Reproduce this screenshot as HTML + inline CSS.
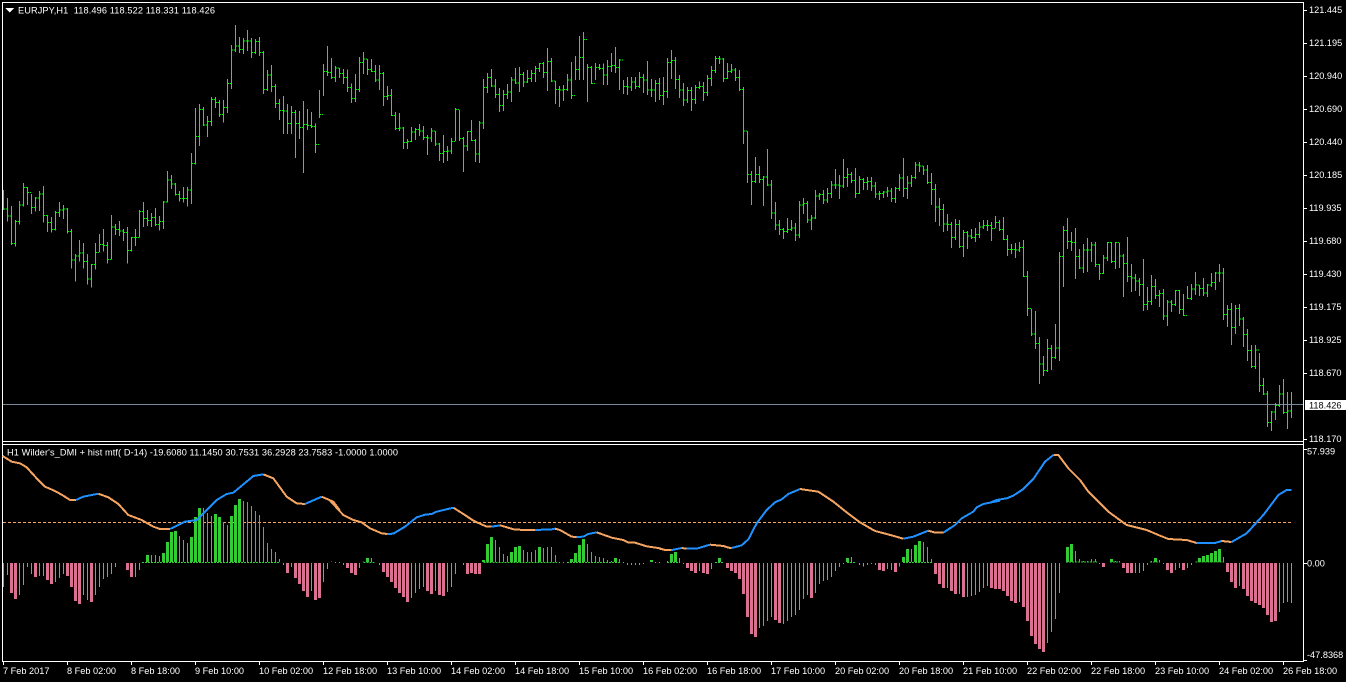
<!DOCTYPE html>
<html><head><meta charset="utf-8"><title>EURJPY,H1</title>
<style>html,body{margin:0;padding:0;background:#000;width:1346px;height:682px;overflow:hidden}svg{display:block}
text{font-family:"Liberation Sans",sans-serif;font-size:9.2px;fill:#fff}</style></head><body>
<svg width="1346" height="682" viewBox="0 0 1346 682" xmlns="http://www.w3.org/2000/svg">
<rect width="1346" height="682" fill="#000"/>
<g shape-rendering="crispEdges" fill="none">
<path d="M2.5 2V662M2 2.5H1304M1303.5 2V662M2 441.5H1304M2 444.5H1304M2 661.5H1304" stroke="#fff"/>
<path d="M1304 10.5h3M1304 43.5h3M1304 76.5h3M1304 109.5h3M1304 142.5h3M1304 175.5h3M1304 208.5h3M1304 241.5h3M1304 274.5h3M1304 307.5h3M1304 340.5h3M1304 373.5h3M1304 439.5h3M1304 449.5h3M1304 563.5h3M1304 660.5h3" stroke="#fff"/>
<path d="M3.5 662v3M67.5 662v3M131.5 662v3M195.5 662v3M259.5 662v3M323.5 662v3M387.5 662v3M451.5 662v3M515.5 662v3M579.5 662v3M643.5 662v3M707.5 662v3M771.5 662v3M835.5 662v3M899.5 662v3M963.5 662v3M1027.5 662v3M1091.5 662v3M1155.5 662v3M1219.5 662v3M1283.5 662v3" stroke="#fff"/>
<path d="M3 404.5H1303" stroke="#778899"/>
<path d="M3 522.5H1291" stroke="#f4a460" stroke-dasharray="3 2"/>
<rect x="1305" y="400" width="41" height="10" fill="#fff"/>
<path d="M5 8h9l-4.5 4.5z" fill="#fff"/>

<g stroke="#00ff00" stroke-width="3.01" transform="translate(.17,20) scale(.33333)">
<path d="M10 510V570M22 534V605M34 558V675M46 600V680M58 543V614M70 489V560M82 501V555M94 522V582M106 531V575M118 513V573M130 498V608M142 585V636M154 591V638M166 573V632M178 546V591M190 555V597M202 564V641M214 627V746M226 702V785M238 660V725M250 669V745M262 702V794M274 732V803M286 669V749M298 642V696M310 627V695M322 666V731M334 585V718M346 612V645M358 603V648M370 627V663M382 621V731M394 651V695M406 627V678M418 570V653M430 546V621M442 570V618M454 579V621M466 564V618M478 588V632M490 543V627M502 453V547M514 465V507M526 489V527M538 513V545M550 501V548M562 501V560M574 399V552M586 264V433M598 252V378M610 261V318M622 288V351M634 231V318M646 231V264M658 240V291M670 240V308M682 177V279M694 75V207M706 15V96M718 51V99M730 54V102M742 30V93M754 54V114M766 57V102M778 51V108M790 93V222M802 150V213M814 135V216M826 192V264M838 237V300M850 228V342M862 252V342M874 258V342M886 270V414M898 273V357M910 243V459M922 267V330M934 276V324M946 310V399M958 210V294M970 132V228M982 78V168"/>
<path stroke-dasharray="3 3" d="M11.5 567h10M23.5 588h10M35.5 670h10M47.5 605h10M59.5 555h10M71.5 502h10M83.5 517h10M95.5 562h10M107.5 534h10M119.5 522h10M131.5 586h10M143.5 607h10M155.5 628h10M167.5 577h10M179.5 570h10M191.5 567h10M203.5 634h10M215.5 720h10M227.5 708h10M239.5 699h10M251.5 724h10M263.5 777h10M275.5 733h10M287.5 697h10M299.5 673h10M311.5 676h10M323.5 718h10M335.5 621h10M347.5 628h10M359.5 633h10M371.5 638h10M383.5 691h10M395.5 652h10M407.5 653h10M419.5 575h10M431.5 595h10M443.5 601h10M455.5 592h10M467.5 613h10M479.5 604h10M491.5 546h10M503.5 480h10M515.5 492h10M527.5 524h10M539.5 535h10M551.5 535h10M563.5 510h10M575.5 430h10M587.5 349h10M599.5 268h10M611.5 315h10M623.5 304h10M635.5 238h10M647.5 247h10M659.5 283h10M671.5 262h10M683.5 190h10M695.5 90h10M707.5 78h10M719.5 88h10M731.5 63h10M743.5 63h10M755.5 98h10M767.5 64h10M779.5 97h10M791.5 208h10M803.5 165h10M815.5 199h10M827.5 250h10M839.5 271h10M851.5 273h10M863.5 310h10M875.5 277h10M887.5 310h10M899.5 322h10M911.5 313h10M923.5 316h10M935.5 320h10M947.5 373h10M959.5 283h10M971.5 154h10M983.5 157h10"/>
</g>
<g stroke="#00ff00" stroke-width="3.01" transform="translate(330.17,20) scale(.33333)">
<path d="M4 114V177M16 138V186M28 144V174M40 147V192M52 148V216M64 190V249M76 162V246M88 111V216M100 96V162M112 117V165M124 117V156M136 135V186M148 135V210M160 156V258M172 198V240M184 207V288M196 276V330M208 279V333M220 321V387M232 357V387M244 321V366M256 324V360M268 312V348M280 318V360M292 345V405M304 324V366M316 333V378M328 369V423M340 345V429M352 378V423M364 354V402M376 264V363M388 270V363M400 351V456M412 333V393M424 300V363M436 357V426M448 303V429M460 177V327M472 159V219M484 147V201M496 177V234M508 204V276M520 210V273M532 192V237M544 171V246M556 144V192M568 141V216M580 156V201M592 150V189M604 150V186M616 138V186M628 129V156M640 126V174M652 84V213M664 114V186M676 183V252M688 198V261M700 195V243M712 162V213M724 126V237M736 108V180M748 48V180M760 36V180M772 132V246M784 138V192M796 129V180M808 132V150M820 130V195M832 120V195M844 99V156M856 81V159M868 117V210M880 180V222M892 171V225M904 171V213M916 171V207M928 156V204M940 162V219M952 123V225M964 177V231M976 180V246M988 174V240"/>
<path stroke-dasharray="3 3" d="M5.5 172h10M17.5 144h10M29.5 160h10M41.5 172h10M53.5 203h10M65.5 236h10M77.5 208h10M89.5 127h10M101.5 117h10M113.5 148h10M125.5 154h10M137.5 180h10M149.5 160h10M161.5 229h10M173.5 226h10M185.5 286h10M197.5 325h10M209.5 324h10M221.5 367h10M233.5 364h10M245.5 336h10M257.5 328h10M269.5 333h10M281.5 352h10M293.5 354h10M305.5 333h10M317.5 372h10M329.5 400h10M341.5 394h10M353.5 393h10M365.5 365h10M377.5 268h10M389.5 355h10M401.5 378h10M413.5 335h10M425.5 361h10M437.5 402h10M449.5 309h10M461.5 203h10M473.5 172h10M485.5 198h10M497.5 223h10M509.5 256h10M521.5 223h10M533.5 216h10M545.5 180h10M557.5 189h10M569.5 163h10M581.5 186h10M593.5 175h10M605.5 160h10M617.5 146h10M629.5 130h10M641.5 157h10M653.5 125h10M665.5 183h10M677.5 208h10M689.5 210h10M701.5 208h10M713.5 180h10M725.5 226h10M737.5 148h10M749.5 112h10M761.5 58h10M773.5 143h10M785.5 190h10M797.5 143h10M809.5 145h10M821.5 165h10M833.5 140h10M845.5 136h10M857.5 142h10M869.5 120h10M881.5 200h10M893.5 201h10M905.5 186h10M917.5 200h10M929.5 172h10M941.5 180h10M953.5 210h10M965.5 210h10M977.5 190h10M989.5 226h10"/>
</g>
<g stroke="#00ff00" stroke-width="3.01" transform="translate(660.17,40) scale(.33333)">
<path d="M10 111V195M22 54V174M34 30V117M46 51V147M58 105V174M70 129V198M82 141V189M94 141V213M106 135V192M118 124V147M130 126V183M142 105V168M154 78V138M166 48V99M178 48V72M190 54V126M202 69V117M214 72V99M226 84V123M238 90V153M250 141V312M262 273V429M274 393V495M286 351V429M298 378V429M310 408V498M322 327V438M334 420V537M346 486V570M358 540V585M370 564V597M382 534V579M394 540V573M406 549V603M418 483V594M430 474V522M442 483V549M454 525V570M466 450V537M478 459V480M490 450V492M502 444V489M514 423V474M526 387V447M538 405V477M550 357V444M562 384V441M574 396V429M586 384V474M598 408V462M610 414V450M622 411V450M634 411V453M646 426V474M658 453V480M670 453V474M682 441V471M694 444V486M706 441V489M718 402V453M730 354V471M742 408V477M754 405V441M766 366V417M778 366V396M790 378V405M802 375V432M814 399V495M826 432V546M838 474V558M850 492V576M862 522V573M874 546V624M886 537V600M898 540V624M910 570V651M922 573V627M934 567V597M946 564V606M958 546V594M970 540V567M982 540V573"/>
<path stroke-dasharray="3 3" d="M11.5 155h10M23.5 68h10M35.5 61h10M47.5 118h10M59.5 150h10M71.5 180h10M83.5 151h10M95.5 178h10M107.5 143h10M119.5 140h10M131.5 157h10M143.5 115h10M155.5 92h10M167.5 55h10M179.5 57h10M191.5 115h10M203.5 94h10M215.5 90h10M227.5 112h10M239.5 148h10M251.5 273h10M263.5 403h10M275.5 424h10M287.5 403h10M299.5 418h10M311.5 411h10M323.5 435h10M335.5 519h10M347.5 555h10M359.5 568h10M371.5 575h10M383.5 568h10M395.5 564h10M407.5 585h10M419.5 495h10M431.5 490h10M443.5 540h10M455.5 534h10M467.5 468h10M479.5 463h10M491.5 480h10M503.5 460h10M515.5 435h10M527.5 435h10M539.5 438h10M551.5 412h10M563.5 403h10M575.5 421h10M587.5 460h10M599.5 418h10M611.5 428h10M623.5 424h10M635.5 438h10M647.5 462h10M659.5 460h10M671.5 456h10M683.5 453h10M695.5 475h10M707.5 445h10M719.5 414h10M731.5 445h10M743.5 429h10M755.5 412h10M767.5 375h10M779.5 378h10M791.5 390h10M803.5 428h10M815.5 448h10M827.5 501h10M839.5 508h10M851.5 552h10M863.5 553h10M875.5 592h10M887.5 553h10M899.5 619h10M911.5 578h10M923.5 588h10M935.5 592h10M947.5 583h10M959.5 561h10M971.5 556h10M983.5 556h10"/>
</g>
<g stroke="#00ff00" stroke-width="3.01" transform="translate(990.17,200) scale(.33333)">
<path d="M4 66V123M16 48V84M28 60V93M40 51V120M52 105V168M64 132V162M76 129V174M88 126V156M100 120V231M112 213V348M124 327V408M136 333V447M148 411V552M160 468V528M172 417V516M184 435V510M196 372V477M208 156V483M220 78V261M232 54V147M244 96V153M256 84V237M268 147V207M280 132V219M292 114V216M304 126V186M316 126V201M328 192V240M340 165V222M352 126V183M364 126V189M376 126V207M388 129V204M400 162V291M412 111V246M424 192V276M436 222V273M448 234V288M460 177V333M472 261V330M484 225V315M496 237V297M508 270V321M520 267V360M532 300V378M544 300V336M556 270V318M568 270V342M580 282V348M592 258V297M604 252V300M616 216V285M628 255V288M640 234V288M652 252V291M664 219V261M676 216V270M688 192V246M700 204V360M712 315V381M724 309V435M736 315V402M748 312V378M760 351V441M772 387V483M784 435V504M796 435V507M808 459V576M820 534V585M832 573V681M844 633V693M856 609V660M868 555V621M880 537V642M892 576V687M904 576V654"/>
<path stroke-dasharray="3 3" d="M5.5 85h10M17.5 68h10M29.5 88h10M41.5 118h10M53.5 148h10M65.5 148h10M77.5 150h10M89.5 142h10M101.5 229h10M113.5 325h10M125.5 402h10M137.5 430h10M149.5 492h10M161.5 511h10M173.5 445h10M185.5 472h10M197.5 444h10M209.5 170h10M221.5 91h10M233.5 124h10M245.5 127h10M257.5 169h10M269.5 204h10M281.5 150h10M293.5 150h10M305.5 135h10M317.5 194h10M329.5 220h10M341.5 174h10M353.5 127h10M365.5 185h10M377.5 128h10M389.5 168h10M401.5 190h10M413.5 229h10M425.5 234h10M437.5 243h10M449.5 253h10M461.5 313h10M473.5 304h10M485.5 259h10M497.5 286h10M509.5 280h10M521.5 348h10M533.5 306h10M545.5 313h10M557.5 271h10M569.5 328h10M581.5 346h10M593.5 295h10M605.5 267h10M617.5 255h10M629.5 265h10M641.5 279h10M653.5 255h10M665.5 248h10M677.5 219h10M689.5 219h10M701.5 344h10M713.5 328h10M725.5 382h10M737.5 325h10M749.5 357h10M761.5 403h10M773.5 451h10M785.5 499h10M797.5 450h10M809.5 557h10M821.5 582h10M833.5 667h10M845.5 636h10M857.5 616h10M869.5 582h10M881.5 637h10M893.5 633h10"/>
</g>

<!-- histogram -->
<g transform="translate(.17,440) scale(.33333)">
<path stroke="#db7093" stroke-width="3.01" d="M10 369V441M22 369V405M58 369V465M70 369V435M82 369V381M94 369V402M118 369V408M130 369V408M166 369V426M178 369V414M190 369V402M250 369V465M262 369V480M286 369V465M298 369V441M310 369V417M322 369V411M334 369V402M346 369V381M406 369V411M418 369V390M850 369V375M874 369V381M934 369V453M970 369V426M982 369V387"/>
<path stroke="#db7093" stroke-width="9" d="M34 369V459M46 369V477M106 369V411M142 369V420M154 369V432M202 369V408M214 369V441M226 369V483M238 369V492M274 369V486M382 369V390M394 369V411M862 369V399M886 369V414M898 369V432M910 369V453M922 369V471M946 369V480M958 369V474"/>
<path stroke="#32cd32" stroke-width="3.01" d="M454 366V345M466 366V345M478 366V348M538 366V288M550 366V300M562 366V309M610 366V204M622 366V219M634 366V228M670 366V246M682 366V255M730 366V183M742 366V186M754 366V198M766 366V213M778 366V225M790 366V261M802 366V309M814 366V327M826 366V336M838 366V357"/>
<path stroke="#32cd32" stroke-width="9" d="M442 366V345M490 366V339M502 366V306M514 366V276M526 366V273M574 366V291M586 366V231M598 366V204M646 366V222M658 366V231M694 366V228M706 366V195M718 366V177"/>
<path stroke="#32cd32" stroke-width="3" stroke-dasharray="6 3" d="M426 367H840"/>
</g>
<g transform="translate(330.17,490) scale(.33333)">
<path stroke="#db7093" stroke-width="3.01" d="M40 219V225M88 219V234M148 219V225M244 219V324M256 219V309M268 219V297M280 219V291M316 219V303M352 219V306M364 219V291M376 219V252M400 219V225M892 219V225M904 219V225M916 219V225M928 219V225M940 219V222"/>
<path stroke="#db7093" stroke-width="9" d="M52 219V234M64 219V249M76 219V255M160 219V246M172 219V261M184 219V276M196 219V294M208 219V309M220 219V321M232 219V336M292 219V303M304 219V312M328 219V315M340 219V318M412 219V252M424 219V249M436 219V252M448 219V252"/>
<path stroke="#32cd32" stroke-width="3.01" d="M4 216V214M16 216V219M28 216V219M100 216V214M124 216V204M136 216V216M496 216V150M508 216V171M520 216V192M532 216V198M580 216V180M592 216V186M604 216V186M616 216V180M640 216V174M652 216V171M664 216V171M676 216V195M688 216V219M700 216V219M772 216V162M784 216V186M796 216V198M808 216V201M820 216V204M832 216V210M844 216V213M868 216V207M880 216V219M976 216V219M988 216V219M1012 216V214"/>
<path stroke="#32cd32" stroke-width="9" d="M112 216V204M460 216V210M472 216V162M484 216V141M544 216V186M556 216V171M568 216V168M628 216V171M712 216V216M724 216V207M736 216V189M748 216V165M760 216V147M856 216V204M964 216V210"/>
<path stroke="#32cd32" stroke-width="3" stroke-dasharray="6 3" d="M100 217H136M460 217H680M710 217H870"/>
</g>
<g transform="translate(660.17,470) scale(.33333)">
<path stroke="#db7093" stroke-width="3.01" d="M70 279V282M118 279V303M154 279V297M298 279V474M310 279V468M322 279V453M334 279V441M370 279V462M382 279V453M394 279V441M406 279V435M418 279V420M430 279V387M442 279V375M466 279V369M478 279V342M490 279V333M502 279V330M514 279V321M526 279V303M538 279V291M550 279V282M598 279V285M610 279V290M622 279V285M634 279V282M646 279V285M682 279V297M694 279V300M718 279V290M862 279V354M898 279V372M922 279V381M934 279V378M946 279V375M958 279V366M970 279V354M982 279V348"/>
<path stroke="#db7093" stroke-width="9" d="M82 279V294M94 279V303M106 279V309M130 279V309M142 279V312M202 279V294M214 279V303M226 279V309M238 279V327M250 279V372M262 279V441M274 279V492M286 279V501M346 279V450M358 279V459M454 279V384M658 279V300M670 279V303M706 279V306M826 279V312M838 279V342M850 279V354M874 279V363M886 279V372M910 279V381M994 279V354M1006 279V357M1018 279V357"/>
<path stroke="#32cd32" stroke-width="3.01" d="M22 276V273M58 276V264M166 276V279M190 276V276M574 276V261M586 276V276M754 276V237M790 276V216M802 276V231M814 276V267"/>
<path stroke="#32cd32" stroke-width="9" d="M34 276V252M46 276V246M178 276V264M562 276V264M730 276V261M742 276V237M766 276V225M778 276V213"/>
<path stroke="#32cd32" stroke-width="3" stroke-dasharray="6 3" d="M20 277H60M164 277H192M560 277H586M728 277H816"/>
</g>
<g transform="translate(1000.17,560) scale(.33333)">
<path stroke="#db7093" stroke-width="3.01" d="M58 9V126M142 9V249M154 9V216M166 9V177M178 9V99M298 9V12M406 9V39M418 9V39M430 9V33M442 9V15M490 9V12M526 9V30M538 9V24M562 9V24M574 9V15M718 9V78M838 9V156M850 9V129M862 9V126M874 9V129"/>
<path stroke="#db7093" stroke-width="9" d="M10 9V93M22 9V108M34 9V123M46 9V129M70 9V141M82 9V183M94 9V228M106 9V252M118 9V267M130 9V276M310 9V21M370 9V24M382 9V39M394 9V39M502 9V30M514 9V39M550 9V30M682 9V36M694 9V66M706 9V84M730 9V87M742 9V108M754 9V123M766 9V129M778 9V135M790 9V144M802 9V165M814 9V186M826 9V183"/>
<path stroke="#32cd32" stroke-width="3.01" d="M226 6V-27M238 6V-3M250 6V3M262 6V3M274 6V-3M286 6V-3M346 6V3M358 6V3M454 6V3M478 6V0M670 6V-9"/>
<path stroke="#32cd32" stroke-width="9" d="M202 6V-39M214 6V-48M334 6V-3M466 6V-6M598 6V-6M610 6V-12M622 6V-15M634 6V-21M646 6V-27M658 6V-33"/>
<path stroke="#32cd32" stroke-width="3" stroke-dasharray="6 3" d="M198 6H290M330 6H360M450 6H480M586 6H672"/>
</g>

<!-- indicator lines -->
<g stroke-width="6" stroke-linejoin="round" transform="translate(0,440) scale(.33333)">
<path stroke="#f4a460" d="M8 48L35 65 60 70 80 82 110 115 135 140 165 153 190 167 210 180 228 180"/>
<path stroke="#1e90ff" d="M228 180L250 170 295 161"/>
<path stroke="#f4a460" d="M295 161L325 172 355 192 385 225 425 240 460 260 480 267 510 267"/>
<path stroke="#1e90ff" d="M510 267L555 245 590 240 610 220 650 180 680 162 700 158 760 108 790 103"/>
<path stroke="#f4a460" d="M790 103L820 115 860 170 890 190 915 192"/>
<path stroke="#1e90ff" d="M915 192L965 170"/>
<path stroke="#f4a460" d="M965 170L1000 185 1020 212"/>
</g>
<g stroke-width="6" stroke-linejoin="round" transform="translate(330,490) scale(.33333)">
<path stroke="#f4a460" d="M0 32L40 75 70 90 95 97 120 115 155 130 172 132"/>
<path stroke="#1e90ff" d="M172 132L190 131 225 110 260 82 285 74 305 72 320 65 370 53"/>
<path stroke="#f4a460" d="M370 53L400 72 430 92 470 110 485 110"/>
<path stroke="#1e90ff" d="M485 110L510 106"/>
<path stroke="#f4a460" d="M510 106L555 119 615 120"/>
<path stroke="#1e90ff" d="M615 120L665 118 675 116"/>
<path stroke="#f4a460" d="M675 116L690 120 725 140 740 141"/>
<path stroke="#1e90ff" d="M740 141L760 140 775 132 800 127"/>
<path stroke="#f4a460" d="M800 127L845 143 880 150 895 158 915 158 950 169 985 174 1005 180 1020 180"/>
</g>
<g stroke-width="6" stroke-linejoin="round" transform="translate(660,470) scale(.33333)">
<path stroke="#f4a460" d="M0 236L15 240 35 240"/>
<path stroke="#1e90ff" d="M35 240L65 234"/>
<path stroke="#f4a460" d="M65 234L80 236"/>
<path stroke="#1e90ff" d="M80 236L110 236 150 224"/>
<path stroke="#f4a460" d="M150 224L190 228 205 233 215 234"/>
<path stroke="#1e90ff" d="M215 234L245 226 265 208 290 160 320 120 345 97 365 88 385 72 420 57"/>
<path stroke="#f4a460" d="M420 57L475 65 520 95 560 127 600 157 645 183 680 192 730 206"/>
<path stroke="#1e90ff" d="M730 206L760 200 805 182"/>
<path stroke="#f4a460" d="M805 182L825 188 850 188"/>
<path stroke="#1e90ff" d="M850 188L885 165 905 145 940 125 950 112 970 102 1000 96 1020 92"/>
</g>
<g stroke-width="6" stroke-linejoin="round" transform="translate(990,445) scale(.33333)">
<path stroke="#1e90ff" d="M0 173L20 165 50 160 70 152 100 132 130 102 165 50 190 30"/>
<path stroke="#f4a460" d="M190 30L205 30 235 70 270 105 295 140 355 200 410 240 470 255 510 272 535 282 590 285 620 294"/>
<path stroke="#1e90ff" d="M620 294L675 294 695 288"/>
<path stroke="#f4a460" d="M695 288L725 291"/>
<path stroke="#1e90ff" d="M725 291L770 265 820 210 865 150 890 135 905 135"/>
</g>
</g>

<text x="18" y="13.5" textLength="197" xml:space="preserve">EURJPY,H1  118.496 118.522 118.331 118.426</text>
<text x="7" y="455.5" textLength="391">H1 Wilder's_DMI + hist mtf( D-14) -19.6080 11.1450 30.7531 36.2928 23.7583 -1.0000 1.0000</text>
<g>
<text x="1309" y="13">121.445</text>
<text x="1309" y="46">121.195</text>
<text x="1309" y="79">120.940</text>
<text x="1309" y="112">120.690</text>
<text x="1309" y="145">120.440</text>
<text x="1309" y="178">120.185</text>
<text x="1309" y="211">119.935</text>
<text x="1309" y="244">119.680</text>
<text x="1309" y="277">119.430</text>
<text x="1309" y="310">119.175</text>
<text x="1309" y="343">118.925</text>
<text x="1309" y="376">118.670</text>
<text x="1309" y="408.5" style="fill:#000">118.426</text>
<text x="1309" y="442">118.170</text>
<text x="1307" y="454.5">57.939</text>
<text x="1307" y="566.5">0.00</text>
<text x="1307" y="658">-47.8368</text>
</g>
<g>
<text x="3" y="674">7 Feb 2017</text>
<text x="67" y="674">8 Feb 02:00</text>
<text x="131" y="674">8 Feb 18:00</text>
<text x="195" y="674">9 Feb 10:00</text>
<text x="259" y="674">10 Feb 02:00</text>
<text x="323" y="674">12 Feb 18:00</text>
<text x="387" y="674">13 Feb 10:00</text>
<text x="451" y="674">14 Feb 02:00</text>
<text x="515" y="674">14 Feb 18:00</text>
<text x="579" y="674">15 Feb 10:00</text>
<text x="643" y="674">16 Feb 02:00</text>
<text x="707" y="674">16 Feb 18:00</text>
<text x="771" y="674">17 Feb 10:00</text>
<text x="835" y="674">20 Feb 02:00</text>
<text x="899" y="674">20 Feb 18:00</text>
<text x="963" y="674">21 Feb 10:00</text>
<text x="1027" y="674">22 Feb 02:00</text>
<text x="1091" y="674">22 Feb 18:00</text>
<text x="1155" y="674">23 Feb 10:00</text>
<text x="1219" y="674">24 Feb 02:00</text>
<text x="1283" y="674">26 Feb 18:00</text>
</g>
</svg>
</body></html>
